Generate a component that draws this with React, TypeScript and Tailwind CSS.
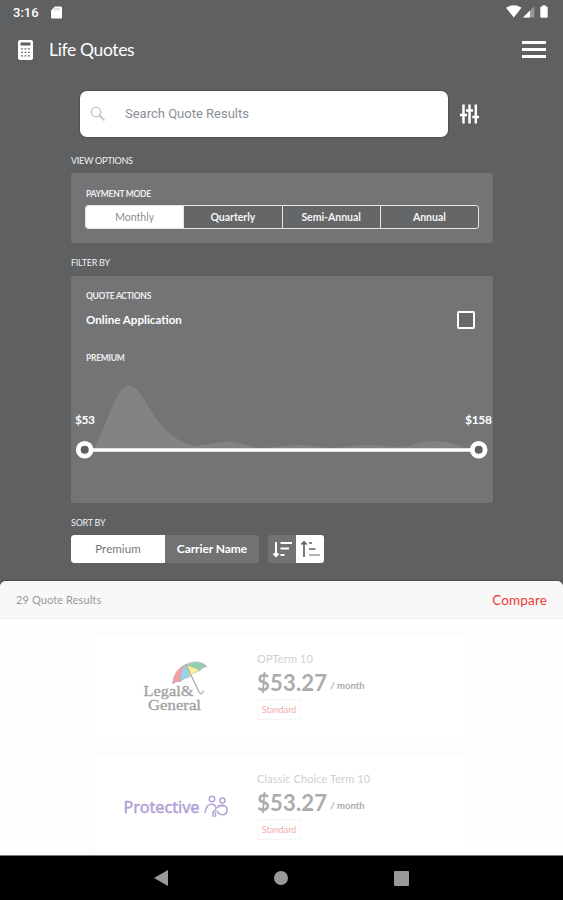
import type { ReactNode } from 'react';

const paymentModes = ['Monthly', 'Quarterly', 'Semi-Annual', 'Annual'];

function StatusBar() {
  return (
    <div className="flex h-6 items-center justify-between pl-[13px] pr-[13px] font-[Roboto] text-white">
      <div className="flex items-center gap-[12px]">
        <span className="w-[26px] whitespace-nowrap pt-px text-[13px] font-medium leading-6">3:16</span>
        <svg width="11" height="13" viewBox="0 0 11 13">
          <path d="M4 .5h6a1 1 0 0 1 1 1v10a1 1 0 0 1-1 1H1a1 1 0 0 1-1-1V4.5z" fill="#fff" />
          <path d="M4 2.2v2M6 2.2v2M8 2.2v2" stroke="#b5b6b7" strokeWidth=".9" />
        </svg>
      </div>
      <svg width="44" height="14" viewBox="0 0 44 14">
        <path d="M0 2.7Q7.7-2 15.5 2.7L7.8 12.5z" fill="#fff" />
        <path d="M28.3 1.2v11.3H17z" fill="#97989a" />
        <path d="M24 5.5v7h-7z" fill="#fff" />
        <path d="M36.5.3h3v1.2h1.2a1 1 0 0 1 1 1v9.3a1 1 0 0 1-1 1h-5.4a1 1 0 0 1-1-1V2.5a1 1 0 0 1 1-1h1.2z" fill="#fff" />
      </svg>
    </div>
  );
}

function Header() {
  return (
    <header className="flex h-[52px] items-center pb-px pl-[18px] pr-[17px] text-white">
      <svg width="15" height="20" viewBox="0 0 15 20">
        <rect width="15" height="20" rx="2" fill="#fff" />
        <rect x="2.5" y="2.5" width="10" height="3" rx=".5" fill="#5f6062" />
        <path
          d="M3 8.8h2M6.5 8.8h2M10 8.8h2M3 12.3h2M6.5 12.3h2M10 12.3h2M3 15.8h2M6.5 15.8h2M10 15.8h2"
          stroke="#77787a"
          strokeWidth="1.3"
        />
      </svg>
      <h1 className="ml-[16px] flex-1 text-[17.500px] leading-6 tracking-[-0.350px]">Life Quotes</h1>
      <button className="flex w-[24px] flex-col gap-[4px]" aria-label="Menu">
        <span className="h-[3px] w-full bg-white" />
        <span className="h-[3px] w-full bg-white" />
        <span className="h-[3px] w-full bg-white" />
      </button>
    </header>
  );
}

function SearchRow() {
  return (
    <div className="mt-[15px] flex items-center pl-[80px]">
      <div className="flex h-[46px] w-[368px] items-center rounded-[7px] bg-white pl-[10px] shadow-[0_0_1px_1px_#505153]">
        <svg width="16" height="16" viewBox="0 0 16 16" fill="none" stroke="#bdbfc0" strokeWidth="1.3">
          <circle cx="6" cy="6" r="4.8" />
          <path d="m9.5 9.5 5 5" strokeWidth="1.7" />
        </svg>
        <span className="ml-[19px] font-[Roboto] text-[13px] text-[#8a9099]">Search Quote Results</span>
      </div>
      <svg className="ml-[12px]" width="19" height="20" viewBox="0 0 19 20" fill="none" stroke="#fff">
        <path d="M3.5.5v19M9.5.5v19M15.8.5v19" strokeWidth="2.5" />
        <path d="M0 11h7M6 6.5h7M12.3 13h6.7" strokeWidth="2.6" />
      </svg>
    </div>
  );
}

function Label({ children }: { children: ReactNode }) {
  return <div className="text-[9px] leading-3 tracking-[-0.250px] text-[#f0f0f0]">{children}</div>;
}

function PanelLabel({ children }: { children: ReactNode }) {
  return (
    <div className="pl-px text-[8.500px] font-bold leading-3 tracking-[-0.280px] text-[#ededed]">{children}</div>
  );
}

function PremiumSlider() {
  return (
    <svg className="mt-[13px] block" width="422" height="92" viewBox="71 377 422 92">
      <path
        d="M94 449C100 440 107 417 114 403C119 392 124 385.500 129 385.500C138 385.500 145 402 155 417C165 431 176 441 193 446C203 446 214 442 229 441.500C240 442 248 447 260 448C274 448 285 445 299 445C312 445 321 448 335 448C348 446 360 445 372 445C385 446 397 448 410 446C420 442 428 441 437 441C452 442 460 446 471 450H94Z"
        fill="#828385"
      />
      <path d="M85 450H479" stroke="#fff" strokeWidth="3.4" />
      <circle cx="84.700" cy="449.800" r="6.400" fill="#5f6062" stroke="#fff" strokeWidth="4.800" />
      <circle cx="478.700" cy="449.800" r="6.400" fill="#5f6062" stroke="#fff" strokeWidth="4.800" />
      <g fill="#fff" fontFamily="Lato, sans-serif" fontSize="12" fontWeight="700">
        <text x="75" y="424" textLength="20">$53</text>
        <text x="465" y="424" textLength="27">$158</text>
      </g>
    </svg>
  );
}

function SortRow() {
  return (
    <div className="mt-[6px] flex h-[28px]">
      <div className="flex w-[188px] overflow-hidden rounded-[3px] bg-[#717274] text-[12px]">
        <button className="w-[94px] rounded-l-[3px] bg-white text-[11.500px] tracking-[0.100px] text-[#747577]">Premium</button>
        <button className="flex-1 font-bold tracking-[-0.080px] text-white">Carrier Name</button>
      </div>
      <div className="ml-[9px] flex w-[56px] overflow-hidden rounded-[3px] bg-[#717274]">
        <button className="flex w-[28px] items-center justify-center" aria-label="Descending">
          <svg width="20" height="18" viewBox="0 0 20 18" fill="none" stroke="#fff" strokeWidth="2">
            <path d="M4 2v14M1.500 13.500l2.500 2.500 2.500-2.500M8.500 3H20M8.500 8.500H17M8.500 15h4" />
          </svg>
        </button>
        <button className="flex w-[28px] items-center justify-center bg-white" aria-label="Ascending">
          <svg width="20" height="18" viewBox="0 0 20 18" fill="none" stroke="#5f6062" strokeWidth="1.700">
            <path d="M4 17V2M1.300 4.500 4 2l2.700 2.500M9 3h3M9 9h6.500" />
            <path d="M9 15h11" stroke="#98999a" />
          </svg>
        </button>
      </div>
    </div>
  );
}

function LegalGeneralLogo() {
  return (
    <svg width="72" height="54" viewBox="142 659 72 54">
      <g stroke="#b5b5b5" strokeWidth=".6">
        <path d="M173.500 684C174 675 179 667 187 664.500L181.500 681.500Q177 681 173.500 684Z" fill="#f2a0a5" />
        <path d="M187 664.500 190.500 677Q185 678 181.500 681.500C181.500 674 183 668 187 664.500Z" fill="#92d6ee" />
        <path d="M187 664.500 201 670.500Q194 672 190.500 677Z" fill="#fcf394" />
        <path d="M187 664.500C194 660.500 203 661 208 666.500Q203.500 667 201 670.500Q195 667 187 664.500Z" fill="#91d0ac" />
      </g>
      <path d="M187 664.500 200 692Q202.500 696 204.500 690.500" fill="none" stroke="#aaa" strokeWidth="1.200" />
      <g fill="#a0a0a0" stroke="#a0a0a0" strokeWidth=".3" fontFamily="Liberation Serif, serif">
        <text x="144.500" y="695.500" fontSize="15" textLength="50" lengthAdjust="spacingAndGlyphs">Legal&amp;</text>
        <text x="149" y="709.500" fontSize="14" textLength="53" lengthAdjust="spacingAndGlyphs">General</text>
      </g>
    </svg>
  );
}

function ProtectiveLogo() {
  return (
    <svg width="108" height="26" viewBox="123 792 108 26">
      <text x="123.500" y="812" fill="#b3a2d5" stroke="#b3a2d5" strokeWidth=".5" fontFamily="Noto Sans, sans-serif" fontSize="15.500" fontWeight="400" textLength="76" lengthAdjust="spacingAndGlyphs">
        Protective
      </text>
      <g fill="none" stroke="#b3a2d5" strokeWidth="1.500">
        <circle cx="212" cy="798" r="2.700" />
        <circle cx="222.500" cy="799.500" r="2.500" />
        <path d="M205 812C206 805 209 802.500 213 803.500C218 805 216 810 213 811V816M218 805C223 803 228 805 227 810C226 815 219 815 217 809.500" />
        <path d="M215.500 811V816M217 807C219 805 222 804 224 805" />
      </g>
    </svg>
  );
}

function QuoteCard({ name, logo }: { name: string; logo: ReactNode }) {
  return (
    <div className="flex h-[106px] w-[374px] shrink-0 border border-[#fafafa] bg-white">
      <div className="flex w-[161px] items-center justify-center">{logo}</div>
      <div className="pt-[17px] text-[#acacad]">
        <div className="text-[11px] leading-4 tracking-[0.100px] text-[#cfcfd0]">{name}</div>
        <div className="flex h-[32px] items-center">
          <span className="text-[22px] font-bold leading-6 tracking-[0.200px]">$53.27</span>
          <span className="ml-[3px] pt-[6px] text-[9.500px] font-bold">/ month</span>
        </div>
        <div className="flex h-[21px] w-[44px] items-center justify-center border border-[#f4f4f4] text-[8.800px] text-[#f5aaa6]">
          Standard
        </div>
      </div>
    </div>
  );
}

function NavigationBar() {
  return (
    <nav className="flex h-[45px] shrink-0 items-center justify-center gap-[106px] border-t border-[#777] bg-black">
      <svg width="14" height="16" viewBox="0 0 14 16">
        <path d="M0 8 14 0v16z" fill="#999" />
      </svg>
      <span className="size-[14px] rounded-full bg-[#999]" />
      <span className="size-[15px] rounded-[1px] bg-[#999]" />
    </nav>
  );
}

export default function App() {
  return (
    <div className="flex h-[900px] w-[563px] flex-col overflow-hidden bg-[#5f6062] font-[Lato,sans-serif]">
      <StatusBar />
      <Header />
      <SearchRow />

      <main className="flex h-[444px] w-[493px] shrink-0 flex-col pl-[71px] pt-[18px]">
        <Label>VIEW OPTIONS</Label>
        <section className="mt-[6px] h-[70px] rounded-[3px] bg-[#737476] px-[14px] pt-[15px]">
          <PanelLabel>PAYMENT MODE</PanelLabel>
          <div className="mt-[5px] flex h-[24px] overflow-hidden rounded-[3px] border-[1.500px] border-[#e6e6e6] bg-[#656668]">
            {paymentModes.map((mode, index) => (
              <button
                key={mode}
                className={
                  index === 0
                    ? 'flex-1 bg-white pt-0.5 text-[10.500px] text-[#8c8d8e]'
                    : 'flex-1 border-l border-[#e6e6e6] pt-0.5 text-[10.500px] font-bold tracking-[-0.020px] text-[#f5f5f5]'
                }
              >
                {mode}
              </button>
            ))}
          </div>
        </section>

        <div className="mt-[14px]">
          <Label>FILTER BY</Label>
        </div>
        <section className="mt-[7px] h-[227px] shrink-0 rounded-[3px] bg-[#737476] pt-[14px]">
          <div className="px-[14px]">
            <PanelLabel>QUOTE ACTIONS</PanelLabel>
            <div className="mt-[7px] flex h-[22px] items-center justify-between pr-[4px] text-white">
              <span className="pl-px text-[11.600px] font-bold">Online Application</span>
              <span className="size-[18px] rounded-[2px] border-2 border-white bg-[#68696b]" />
            </div>
            <div className="mt-[21px]">
              <PanelLabel>PREMIUM</PanelLabel>
            </div>
          </div>
          <PremiumSlider />
        </section>

        <div className="mt-[14px]">
          <Label>SORT BY</Label>
        </div>
        <SortRow />
      </main>

      <section className="flex min-h-0 flex-1 flex-col overflow-hidden rounded-t-[6px] bg-[#fefefe] shadow-[0_-1px_1px_#4c4d4f]">
        <div className="flex h-[38px] shrink-0 items-center justify-between border-b border-[#efefef] bg-[#f8f8f8] px-[16px] pt-px">
          <span className="text-[11px] tracking-[0.100px] text-[#98999a]">29 Quote Results</span>
          <button className="text-[13.500px] tracking-[0.150px] text-[#ed3a34]">Compare</button>
        </div>
        <div className="flex flex-col gap-[14px] pl-[95px] pt-[14px]">
          <QuoteCard name="OPTerm 10" logo={<LegalGeneralLogo />} />
          <QuoteCard name="Classic Choice Term 10" logo={<ProtectiveLogo />} />
        </div>
      </section>
      <NavigationBar />
    </div>
  );
}
